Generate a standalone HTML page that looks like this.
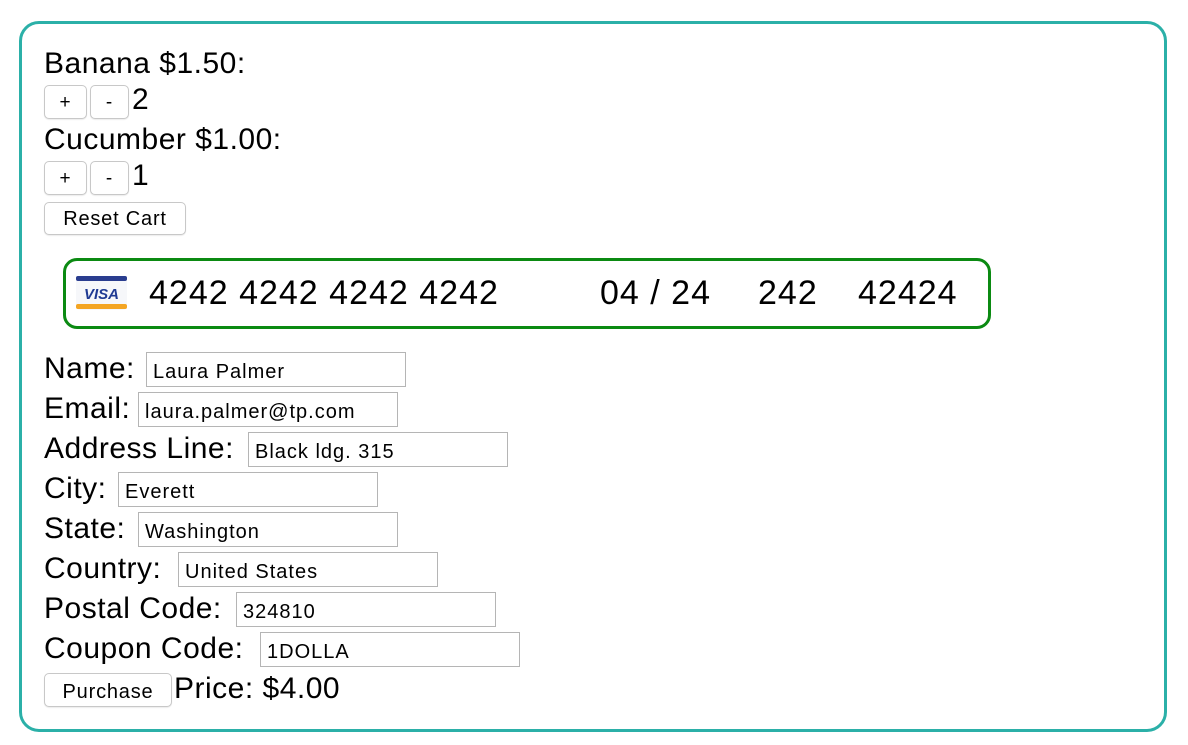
<!DOCTYPE html>
<html><head><meta charset="utf-8"><style>
*{margin:0;padding:0;box-sizing:border-box}
body{width:1188px;height:745px;background:#fff;font-family:"Liberation Sans",sans-serif;color:#000;position:relative;overflow:hidden}
.frame{position:absolute;left:19px;top:21px;width:1148px;height:711px;border:3px solid #2bb0a8;border-radius:20px}
.t{position:absolute;font-size:30px;line-height:34px;white-space:nowrap;letter-spacing:0.5px}
.b{position:absolute;border:1px solid #c8c8c8;border-radius:5px;background:#fff;font-size:19px;text-align:center;box-shadow:0 1px 1px rgba(0,0,0,.08);letter-spacing:0.8px}
.in{position:absolute;border:1px solid #b5b5b5;height:35px;width:260px;font-size:20px;line-height:38px;padding-left:6px;white-space:nowrap;letter-spacing:1px}
.card{position:absolute;left:63px;top:258px;width:928px;height:71px;border:3px solid #0b8a12;border-radius:14px}
.c{position:absolute;top:273px;font-size:34px;line-height:40px;white-space:nowrap;letter-spacing:1px}
</style></head><body>
<div class="frame"></div>
<div class="t" style="left:44px;top:47px">Banana $1.50:</div>
<div class="b" style="left:44px;top:85px;width:43px;height:34px;line-height:34px">+</div>
<div class="b" style="left:90px;top:85px;width:39px;height:34px;line-height:34px">-</div>
<div class="t" style="left:132px;top:83px">2</div>
<div class="t" style="left:44px;top:123px">Cucumber $1.00:</div>
<div class="b" style="left:44px;top:161px;width:43px;height:34px;line-height:34px">+</div>
<div class="b" style="left:90px;top:161px;width:39px;height:34px;line-height:34px">-</div>
<div class="t" style="left:132px;top:159px">1</div>
<div class="b" style="left:44px;top:202px;width:142px;height:33px;line-height:33px;font-size:20px">Reset Cart</div>
<div class="card"></div>
<svg style="position:absolute;left:76px;top:276px" width="51" height="34" viewBox="0 0 51 34">
<rect x="0" y="0" width="51" height="34" rx="4" fill="#f6f7fa"/>
<rect x="0" y="0" width="51" height="5" rx="2" fill="#2a3d8f"/>
<rect x="0" y="28" width="51" height="5" rx="2" fill="#f4a523"/>
<text x="25.5" y="23" text-anchor="middle" font-family="Liberation Sans" font-weight="bold" font-style="italic" font-size="15" fill="#1f3a93">VISA</text>
</svg>
<div class="c" style="left:149px">4242 4242 4242 4242</div>
<div class="c" style="left:600px">04 / 24</div>
<div class="c" style="left:758px">242</div>
<div class="c" style="left:858px">42424</div>
<div class="t" style="left:44px;top:352px">Name:</div><div class="in" style="left:146px;top:352px">Laura Palmer</div>
<div class="t" style="left:44px;top:392px">Email:</div><div class="in" style="left:138px;top:392px">laura.palmer@tp.com</div>
<div class="t" style="left:44px;top:432px">Address Line:</div><div class="in" style="left:248px;top:432px">Black ldg. 315</div>
<div class="t" style="left:44px;top:472px">City:</div><div class="in" style="left:118px;top:472px">Everett</div>
<div class="t" style="left:44px;top:512px">State:</div><div class="in" style="left:138px;top:512px">Washington</div>
<div class="t" style="left:44px;top:552px">Country:</div><div class="in" style="left:178px;top:552px">United States</div>
<div class="t" style="left:44px;top:592px">Postal Code:</div><div class="in" style="left:236px;top:592px">324810</div>
<div class="t" style="left:44px;top:632px">Coupon Code:</div><div class="in" style="left:260px;top:632px">1DOLLA</div>
<div class="b" style="left:44px;top:673px;width:128px;height:34px;line-height:36px;font-size:20px">Purchase</div>
<div class="t" style="left:174px;top:672px">Price: $4.00</div>
</body></html>
